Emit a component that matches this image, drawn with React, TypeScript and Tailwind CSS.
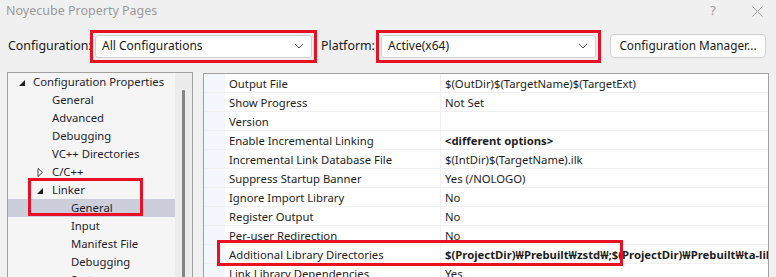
import React from "react";

const font = { fontFamily: '"Noto Sans", "Noto Sans CJK KR", sans-serif' };

const treeItems = [
  { label: "Configuration Properties", indent: "pl-[25px]", arrow: "open0" },
  { label: "General", indent: "pl-[44px]" },
  { label: "Advanced", indent: "pl-[44px]" },
  { label: "Debugging", indent: "pl-[44px]" },
  { label: "VC++ Directories", indent: "pl-[44px]" },
  { label: "C/C++", indent: "pl-[44px]", arrow: "closed" },
  { label: "Linker", indent: "pl-[44px]", arrow: "open1" },
  { label: "General", indent: "pl-[63px]", selected: true },
  { label: "Input", indent: "pl-[63px]" },
  { label: "Manifest File", indent: "pl-[63px]" },
  { label: "Debugging", indent: "pl-[63px]" },
  { label: "System", indent: "pl-[63px]" },
];

const props: [string, string, boolean?][] = [
  ["Output File", "$(OutDir)$(TargetName)$(TargetExt)"],
  ["Show Progress", "Not Set"],
  ["Version", ""],
  ["Enable Incremental Linking", "<different options>", true],
  ["Incremental Link Database File", "$(IntDir)$(TargetName).ilk"],
  ["Suppress Startup Banner", "Yes (/NOLOGO)"],
  ["Ignore Import Library", "No"],
  ["Register Output", "No"],
  ["Per-user Redirection", "No"],
  ["Additional Library Directories", "$(ProjectDir)₩Prebuilt₩zstd₩;$(ProjectDir)₩Prebuilt₩ta-lib₩", true],
  ["Link Library Dependencies", "Yes"],
];

const Chevron = () => (
  <svg width="10" height="6" viewBox="0 0 10 6" className="shrink-0">
    <path d="M1 1 L5 5 L9 1" fill="none" stroke="#555" strokeWidth="1" />
  </svg>
);

const Select = ({ value, width }: { value: string; width: string }) => (
  <div className="border-[3px] border-[#e81123] p-[2px]">
    <div className={`${width} h-[23px] bg-white border border-[#d0d0d0] rounded-[3px] flex items-center justify-between pl-[6px] pr-[7px] text-[#1a1a1a]`}>
      <span>{value}</span>
      <Chevron />
    </div>
  </div>
);

const Arrow = ({ kind }: { kind?: string }) => {
  if (kind === "closed")
    return (
      <svg width="7" height="9" viewBox="0 0 7 9" className="absolute left-[29px] top-[5px]">
        <path d="M1 0.5 L5.5 4.5 L1 8.5 Z" fill="none" stroke="#444" strokeWidth="1" />
      </svg>
    );
  if (kind === "open0" || kind === "open1")
    return (
      <svg width="6" height="6" viewBox="0 0 6 6" className={`absolute top-[7px] ${kind === "open0" ? "left-[11px]" : "left-[29px]"}`}>
        <path d="M6 0 L6 6 L0 6 Z" fill="#1e1e1e" />
      </svg>
    );
  return null;
};

export default function App() {
  return (
    <div className="w-[776px] h-[277px] overflow-hidden bg-[#f0f0f0] text-[12px] relative" style={font}>
      {/* title bar */}
      <div className="h-[22px] flex items-center justify-between pl-[6px] pr-[13px]">
        <span className="text-[#9a9a9a] text-[12.5px]">Noyecube Property Pages</span>
        <div className="flex items-center gap-[36px] text-[#9a9a9a]">
          <span className="text-[13px]">?</span>
          <svg width="11" height="11" viewBox="0 0 11 11">
            <path d="M0.5 0.5 L10.5 10.5 M10.5 0.5 L0.5 10.5" stroke="#9a9a9a" strokeWidth="1" />
          </svg>
        </div>
      </div>

      {/* configuration row */}
      <div className="flex items-center h-[44px] pl-[8px] pt-[6px] pb-[2px]">
        <span className="text-[#1a1a1a] w-[82px] text-[12.4px]">Configuration:</span>
        <Select value="All Configurations" width="w-[217px]" />
        <span className="text-[#1a1a1a] ml-[4px] w-[55px] text-[12.4px]">Platform:</span>
        <Select value="Active(x64)" width="w-[215px]" />
        <div className="ml-[9px] w-[156px] h-[24px] bg-[#fdfdfd] border border-[#d0d0d0] rounded-[4px] flex items-center justify-center text-[#1a1a1a] text-[11.8px]">
          Configuration Manager...
        </div>
      </div>

      <div className="flex pl-[7px] pt-[6px] gap-[10px] text-[11.3px]">
        {/* tree */}
        <div className="w-[186px] h-[220px] border border-[#a0a0a0] border-b-0 bg-[#f5f5f5] flex">
          <div className="flex-1 relative">
            {treeItems.map((t, i) => (
              <div
                key={i}
                className={`relative h-[18px] flex items-center whitespace-nowrap ${t.indent} text-[#1e1e2e] ${t.selected ? "bg-[#cccedb]" : ""}`}
              >
                <Arrow kind={t.arrow} />
                {t.label}
              </div>
            ))}
            <div className="absolute left-[20px] top-[105px] w-[115px] h-[38px] border-[3px] border-[#e81123]" />
          </div>
          <div className="w-[17px] bg-[#ececec] flex justify-center pt-[17px]">
            <div className="w-[3px] h-full bg-[#858585] rounded-t-[1px]" />
          </div>
        </div>

        {/* property grid */}
        <div className="w-[566px] h-[220px] mt-[1px] border border-[#a0a0a0] border-b-0 bg-white relative">
          {props.map(([name, value, bold], i) => (
            <div key={i} className="flex h-[19px] border-b border-[#f0f0f0]">
              <div className="w-[21px] bg-[#f3f6fb] shrink-0" />
              <div className="w-[216px] shrink-0 flex items-center pl-[4px] pt-[2px] text-[#1e1e1e] border-r border-[#f0f0f0] whitespace-nowrap">{name}</div>
              <div className={`flex-1 flex items-center pl-[4px] pt-[2px] whitespace-nowrap overflow-hidden text-[#1e1e1e] ${bold ? "font-bold" : ""}`}>
                {value}
              </div>
            </div>
          ))}
          <div className="absolute left-[13px] top-[166px] w-[406px] h-[26px] border-[3px] border-[#e81123]" />
        </div>
      </div>
    </div>
  );
}
